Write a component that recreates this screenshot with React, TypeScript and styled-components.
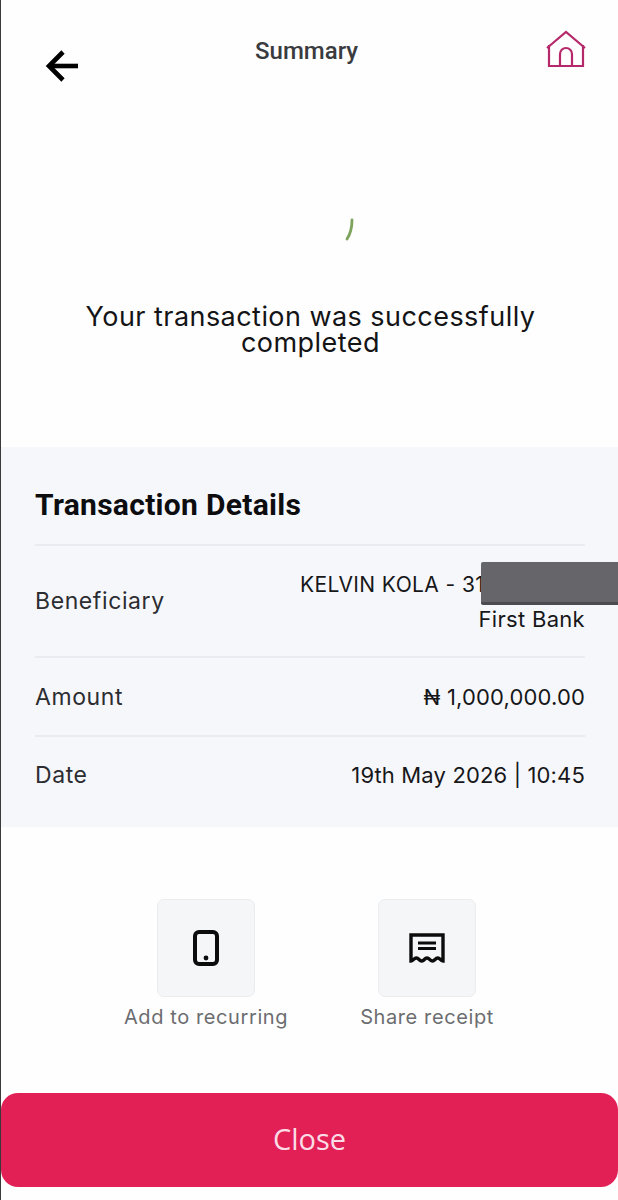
import { createGlobalStyle } from 'styled-components';
import styled from 'styled-components';

const GlobalStyle = createGlobalStyle`
  html, body {
    margin: 0;
    padding: 0;
    background: #fefefe;
  }
  * {
    box-sizing: border-box;
  }
`;

const wideFont = `"Inter", "Liberation Sans", sans-serif`;

const Page = styled.div`
  width: 618px;
  height: 1200px;
  display: flex;
  flex-direction: column;
  background: #fefefe;
  border-left: 1px solid #3a3a3a;
  overflow: hidden;
`;

const Header = styled.header`
  height: 100px;
  display: grid;
  grid-template-columns: 210px auto 1fr;
  padding: 0 32px 0 44px;
`;

const BackButton = styled.div`
  padding-top: 50px;
  line-height: 0;
`;

const Title = styled.h1`
  margin: 0;
  padding-top: 38px;
  font-family: "Roboto", sans-serif;
  font-weight: 500;
  font-size: 24px;
  line-height: 26px;
  color: #3a3b3e;
`;

const HomeButton = styled.div`
  padding-top: 30px;
  display: flex;
  justify-content: flex-end;
`;

const Status = styled.section`
  height: 347px;
  display: flex;
  flex-direction: column;
  align-items: center;
`;

const Spinner = styled.div`
  margin: 118px 0 0 78px;
  height: 24px;
  line-height: 0;
`;

const Message = styled.p`
  margin: 62px 0 0 2px;
  width: 470px;
  text-align: center;
  font-family: ${wideFont};
  font-size: 27px;
  line-height: 26px;
  letter-spacing: 0.45px;
  color: #141416;
`;

const Details = styled.section`
  height: 380px;
  background: #f6f7fb;
  padding: 0 33px 0 34px;
  display: flex;
  flex-direction: column;
`;

const DetailsTitle = styled.h2`
  margin: 0;
  height: 99px;
  padding-top: 40px;
  border-bottom: 2px solid #e9ebf1;
  font-family: "Roboto", sans-serif;
  font-weight: 700;
  font-size: 30px;
  line-height: 35px;
  letter-spacing: 0.3px;
  color: #0d0d0f;
`;

const Row = styled.div<{ $height: number; $last?: boolean }>`
  height: ${(p) => p.$height}px;
  display: flex;
  align-items: center;
  justify-content: space-between;
  border-bottom: ${(p) => (p.$last ? 'none' : '2px solid #e9ebf1')};
`;

const Label = styled.span`
  font-family: ${wideFont};
  font-size: 23px;
  letter-spacing: 0.6px;
  color: #2c2d31;
`;

const Value = styled.span`
  font-family: ${wideFont};
  font-size: 22px;
  font-weight: 400;
  letter-spacing: 0.15px;
  color: #17171a;
`;

const ValueStack = styled.div`
  position: relative;
  display: flex;
  flex-direction: column;
  align-items: flex-end;
  gap: 8px;
  width: 285px;
  padding-top: 1px;
`;

const AccountLine = styled(Value)`
  align-self: flex-start;
  font-size: 21px;
  line-height: 26px;
  letter-spacing: 0.4px;
`;

const BankLine = styled(Value)`
  line-height: 26px;
  letter-spacing: 0.3px;
`;

const Redaction = styled.div`
  position: absolute;
  left: 181px;
  top: -9px;
  width: 140px;
  height: 43px;
  background: #66666a;
  border-bottom: 3px solid #4c4c50;
  border-radius: 2px 0 0 2px;
`;

const Actions = styled.section`
  height: 266px;
  padding: 72px 0 0 156px;
  display: flex;
  gap: 123px;
`;

const Action = styled.div`
  width: 98px;
  display: flex;
  flex-direction: column;
  align-items: center;
  gap: 7px;
`;

const ActionTile = styled.div`
  width: 98px;
  height: 98px;
  display: flex;
  align-items: center;
  justify-content: center;
  background: #f5f6f8;
  border: 1px solid #ebecef;
  border-radius: 7px;
`;

const ActionLabel = styled.span`
  white-space: nowrap;
  font-family: ${wideFont};
  font-size: 20px;
  line-height: 26px;
  letter-spacing: 0.6px;
  color: #6c6d70;
`;

const Footer = styled.footer`
  flex: 1;
`;

const CloseButton = styled.button`
  display: block;
  width: 617px;
  height: 94px;
  padding: 0 0 4px;
  border: none;
  border-radius: 17px;
  background: #e22056;
  font-family: "Open Sans", sans-serif;
  font-size: 29px;
  color: #fbdbe5;
`;

export default function App() {
  return (
    <>
      <GlobalStyle />
      <Page>
        <Header>
          <BackButton>
            <svg width="36" height="32" viewBox="0 0 36 32" fill="none" stroke="#000" strokeWidth="4.6">
              <path d="M33 16H5" />
              <path d="M18 2 4 16l14 14" />
            </svg>
          </BackButton>
          <Title>Summary</Title>
          <HomeButton>
            <svg width="40" height="38" viewBox="0 0 40 38" fill="none" stroke="#b5296b" strokeWidth="2.2">
              <path d="M1 18 20 2l19 16" />
              <path d="M3 15v21h34V15" />
              <path d="M14 36V24a6 6 0 0 1 12 0v12" />
            </svg>
          </HomeButton>
        </Header>

        <Status>
          <Spinner>
            <svg width="10" height="24" viewBox="0 0 10 24" fill="none" stroke="#7da35c" strokeWidth="2.8" strokeLinecap="round">
              <path d="M8 2c0 7-1 13-5 19" />
            </svg>
          </Spinner>
          <Message>Your transaction was successfully completed</Message>
        </Status>

        <Details>
          <DetailsTitle>Transaction Details</DetailsTitle>
          <Row $height={112}>
            <Label>Beneficiary</Label>
            <ValueStack>
              <AccountLine>KELVIN KOLA - 31</AccountLine>
              <BankLine>First Bank</BankLine>
              <Redaction />
            </ValueStack>
          </Row>
          <Row $height={79}>
            <Label>Amount</Label>
            <Value>₦ 1,000,000.00</Value>
          </Row>
          <Row $height={76} $last>
            <Label>Date</Label>
            <Value>19th May 2026 | 10:45</Value>
          </Row>
        </Details>

        <Actions>
          <Action>
            <ActionTile>
              <svg width="26" height="36" viewBox="0 0 26 36" fill="none">
                <rect x="2" y="2" width="22" height="32" rx="4" stroke="#0c0c0c" strokeWidth="4" />
                <circle cx="13" cy="28" r="2.4" fill="#0c0c0c" />
              </svg>
            </ActionTile>
            <ActionLabel>Add to recurring</ActionLabel>
          </Action>
          <Action>
            <ActionTile>
              <svg width="36" height="30" viewBox="0 0 36 30" fill="none" stroke="#0c0c0c">
                <path d="M2 2h32v26c-2.7 0-2.7-3-5.3-3s-2.7 3-5.4 3-2.700-3-5.300-3-2.700 3-5.300 3-2.700-3-5.400-3S4.700 28 2 28Z" strokeWidth="3.4" />
                <path d="M9 10h18M9 15.500h18" strokeWidth="2.800" />
              </svg>
            </ActionTile>
            <ActionLabel>Share receipt</ActionLabel>
          </Action>
        </Actions>

        <Footer>
          <CloseButton>Close</CloseButton>
        </Footer>
      </Page>
    </>
  );
}
